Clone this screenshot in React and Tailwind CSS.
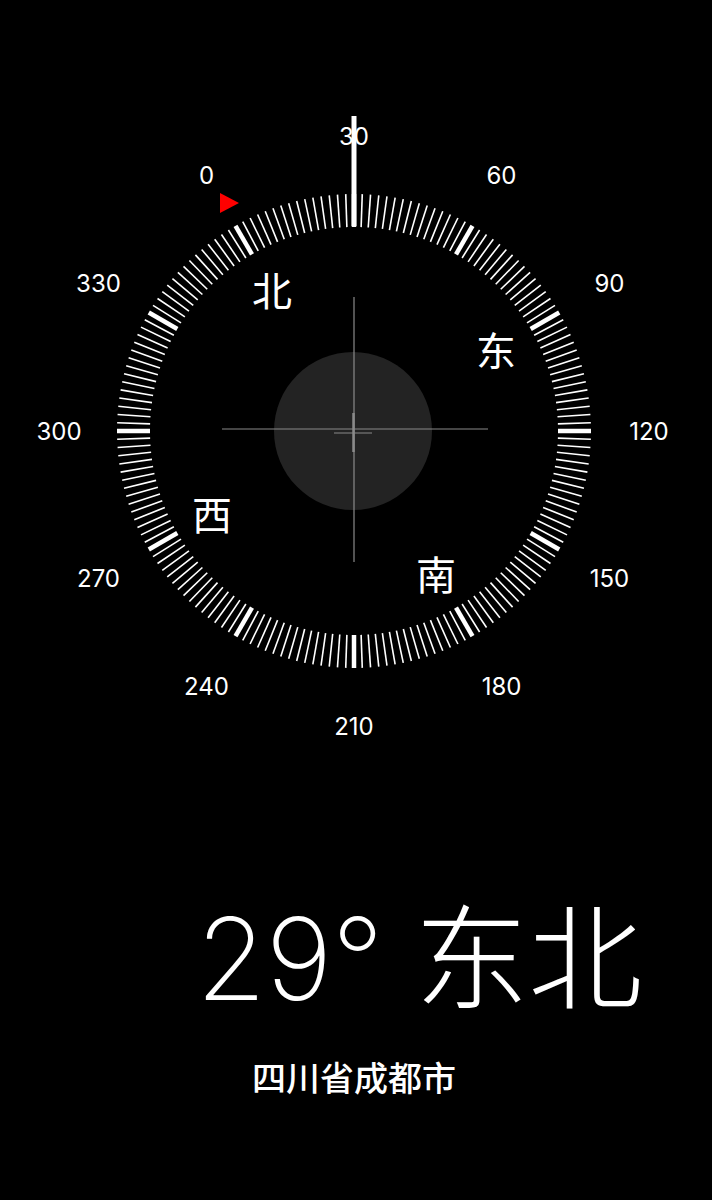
import React from "react";

const CX = 354;
const CY = 431;
const OFFSET = -30;

function polar(r, deg) {
  const a = (deg * Math.PI) / 180;
  return [CX + r * Math.sin(a), CY - r * Math.cos(a)];
}

function Dial() {
  const ticks = [];
  for (let d = 0; d < 360; d += 2) {
    const major = d % 30 === 0;
    const [x1, y1] = polar(204, d);
    const [x2, y2] = polar(237, d);
    ticks.push(
      <line
        key={d}
        x1={x1}
        y1={y1}
        x2={x2}
        y2={y2}
        stroke="#fff"
        strokeWidth={major ? 4.5 : 1.6}
      />
    );
  }

  const labels = [];
  for (let l = 0; l < 360; l += 30) {
    const [x, y] = polar(295, l + OFFSET);
    labels.push(
      <text
        key={l}
        x={x}
        y={y}
        fill="#fff"
        fontSize="24"
        textAnchor="middle"
        dominantBaseline="central"
        className="font-[Inter,'Liberation_Sans',sans-serif]"
      >
        {l}
      </text>
    );
  }

  const cardinals = [
    ["北", 0],
    ["东", 90],
    ["南", 180],
    ["西", 270],
  ].map(([c, d]) => {
    const [x, y] = polar(164, d + OFFSET);
    return (
      <text
        key={c}
        x={x}
        y={y}
        fill="#fff"
        fontSize="40"
        textAnchor="middle"
        dominantBaseline="central"
        className="font-['Noto_Sans_CJK_SC',sans-serif]"
      >
        {c}
      </text>
    );
  });

  return (
    <svg width="712" height="760" viewBox="0 0 712 760" className="block">
      <circle cx={CX - 1} cy={CY} r="79" fill="#232323" />
      <line x1={CX} y1="297" x2={CX} y2="562" stroke="#8a8a8a" strokeWidth="1.2" />
      <line x1="222" y1="429" x2="488" y2="429" stroke="#8a8a8a" strokeWidth="1.2" />
      <line x1="334" y1="433" x2="372" y2="433" stroke="#8a8a8a" strokeWidth="1.2" />
      <line x1={CX - 0.5} y1="413" x2={CX - 0.5} y2="452" stroke="#8a8a8a" strokeWidth="2.5" />
      {ticks}
      <line x1={CX} y1="116" x2={CX} y2="226" stroke="#fff" strokeWidth="5" />
      <polygon points="220,193 220,213 239,203" fill="#ff0000" />
      {labels}
      {cardinals}
    </svg>
  );
}

export default function App() {
  return (
    <div className="w-[712px] h-[1200px] bg-black text-white overflow-hidden flex flex-col">
      <Dial />
      <div className="mt-[142px] pl-[196px] text-[114px] leading-none font-extralight whitespace-nowrap tracking-[-0.5px] font-[Inter,'Noto_Sans_CJK_SC',sans-serif]">
        29° 东北
      </div>
      <div className="mt-[44px] pl-[252px] text-[34px] leading-none font-medium font-['Noto_Sans_CJK_SC',sans-serif]">
        四川省成都市
      </div>
    </div>
  );
}
